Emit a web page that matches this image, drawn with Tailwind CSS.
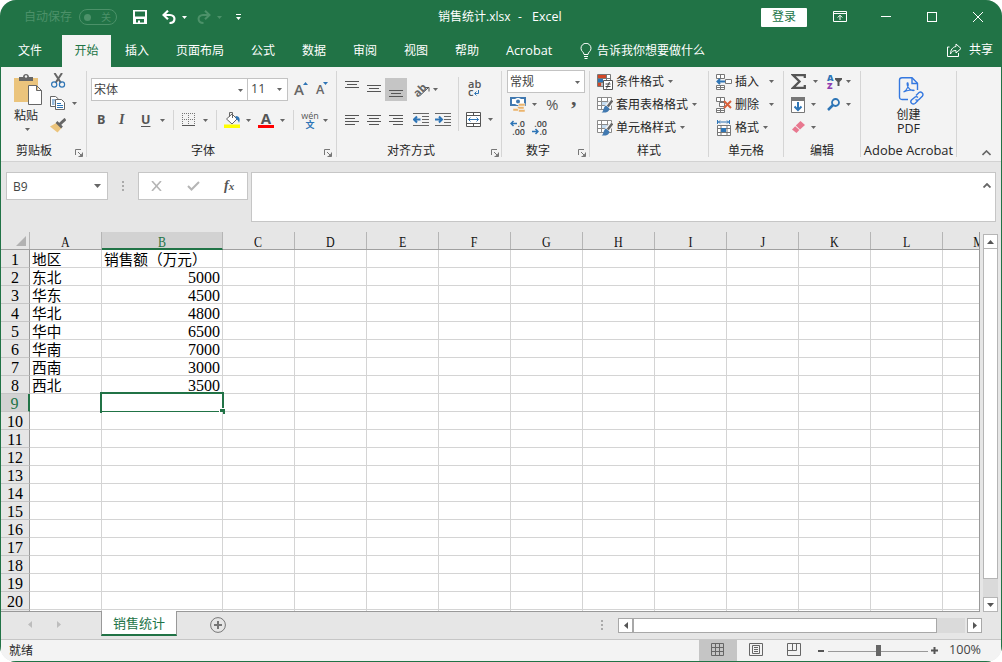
<!DOCTYPE html>
<html lang="zh-CN">

<head>
  <meta charset="UTF-8" />
  <meta name="viewport" content="width=device-width, initial-scale=1.0" />
  <title>销售统计.xlsx - Excel</title>
  <script src="https://cdn.jsdelivr.net/npm/@tailwindcss/browser@4"></script>
</head>

<body class="bg-white">
  <!-- Iconos compartidos -->
  <svg class="hidden">
    <symbol id="caret" viewBox="0 0 5 3"><path d="M0 0h5L2.5 3z" fill="#666" /></symbol>
    <symbol id="launcher" viewBox="0 0 8 8"><path d="M.5 6V.5H6M3 3l4 4M7.5 3.5v4h-4" fill="none" stroke="#777" /><path d="M7.5 4v3.5H4z" fill="#777" /></symbol>
    <symbol id="brushtable" viewBox="0 0 16 16">
      <path d="M.5.5h14v12H.5zM.5 4.5h14M.5 8.5h14M4.500.5v12M10.500.5v12" fill="#fff" stroke="#8a8a8a" />
      <path d="M5 5h5v3H5z" fill="#c5dcf0" />
      <path d="M15.5 3.500l-6 7" stroke="#f3f3f3" stroke-width="5" /><path d="M15.300 3.500l-4.500 6" stroke="#666" stroke-width="2.400" />
      <path d="M9 8.500l3.500 3c-.5 3.500-3.500 4.500-8 4 2.500-1 1.500-6 4.500-7z" fill="#4179b0" />
    </symbol>
  </svg>

  <div class="w-[1002px] h-[662px] rounded-[16px] overflow-hidden font-['Open_Sans','Noto_Sans_CJK_SC',sans-serif] text-[12px] leading-none text-[#262626]">
    <div class="w-full h-full border border-t-0 border-[#217346] bg-[#e6e6e6] flex flex-col whitespace-nowrap">

      <!-- Barra de título -->
      <header class="h-[34px] shrink-0 bg-[#217346] text-white flex items-center pl-[23px] *:shrink-0">
        <span class="w-[55px] text-[#4c9169]">自动保存</span>
        <div class="w-[38px] h-4 mr-4 border border-[#4c9169] rounded-full flex items-center text-[#4c9169] text-[10px]">
          <i class="w-[7px] h-[7px] rounded-full bg-[#4c9169] ml-1 mr-[10px]"></i>关
        </div>
        <svg class="w-[14px] h-[14px] mr-[15px]" viewBox="0 0 14 14"><path d="M0 0h14v14H0zM2 1.500v5h10v-5zM3 9v3.500h2V10.500h2v2h4V9z" fill="#fff" fill-rule="evenodd" /></svg>
        <svg class="w-[14px] h-[14px] mr-[6px]" viewBox="0 0 14 14" fill="none" stroke="#fff" stroke-width="2.200"><path d="M6 .7L1.500 5 6 9.300M2 5h6c6 0 6 8-.5 8" /></svg>
        <svg class="w-[5px] h-[3px] mr-[10px]" viewBox="0 0 5 3"><path d="M0 0h5L2.500 3z" fill="#fff" /></svg>
        <svg class="w-[14px] h-[14px] mr-[6px]" viewBox="0 0 14 14" fill="none" stroke="#4c9169" stroke-width="2"><path d="M8 .7L12.500 5 8 9.300M12 5H6c-6 0-6 8 .5 8" /></svg>
        <svg class="w-[5px] h-[3px] mr-[14px]" viewBox="0 0 5 3"><path d="M0 0h5L2.500 3z" fill="#4c9169" /></svg>
        <svg class="w-[5px] h-[6px] mr-[197px]" viewBox="0 0 5 6"><path d="M0 0h5v1H0zM0 3h5L2.500 6z" fill="#fff" /></svg>
        <h1 class="w-[323px] flex"><span class="w-[80px]">销售统计.xlsx</span><span class="w-[14px]">-</span><span class="text-[12.500px]">Excel</span></h1>
        <button class="w-[46px] h-[19px] mr-[26px] bg-white text-[#217346] rounded-[1px]">登录</button>
        <svg class="w-[14px] h-[12px] mr-[34px] -mt-px" viewBox="0 0 14 12" fill="none" stroke="#fff"><path d="M.5.5h13v10H.5zM.5 2.500h13M7 9V4.500M4.700 6.500L7 4.200 9.300 6.500" /></svg>
        <svg class="w-[10px] h-[11px] mr-9 -mt-px" viewBox="0 0 10 11" stroke="#fff"><path d="M0 5.500h10" /></svg>
        <div class="w-[10px] h-[10px] mr-9 -mt-px border border-white"></div>
        <svg class="w-[10px] h-[10px] -mt-px" viewBox="0 0 10 10" stroke="#fff"><path d="M0 0l10 10M10 0L0 10" /></svg>
      </header>

      <!-- Pestañas -->
      <nav class="h-[33px] shrink-0 bg-[#217346] text-white flex items-center *:shrink-0">
        <span class="w-[61px] pl-[17px]">文件</span>
        <span class="w-[49px] h-8 mr-[14px] self-end bg-[#f3f3f3] text-[#217346] flex items-center justify-center pb-px">开始</span>
        <span class="w-[51px]">插入</span>
        <span class="w-[75px]">页面布局</span>
        <span class="w-[51px]">公式</span>
        <span class="w-[51px]">数据</span>
        <span class="w-[51px]">审阅</span>
        <span class="w-[51px]">视图</span>
        <span class="w-[51px]">帮助</span>
        <span class="w-[74px] text-[12.700px]">Acrobat</span>
        <svg class="w-3 h-4 mr-[5px]" viewBox="0 0 12 16" fill="none" stroke="#fff"><path d="M4 11.500C4 9 1 8.500 1 5.300a5 5 0 0 1 10 0C11 8.500 8 9 8 11.500zM4 13.500h4M4.500 15.500h3" /></svg>
        <span class="w-[350px] pt-px">告诉我你想要做什么</span>
        <svg class="w-[15px] h-[14px] mr-[7px] -mt-[2px]" viewBox="0 0 15 14" fill="none" stroke="#fff"><path d="M2.500 4H.5v9.500h11V10M9 1l5 4.500L9 10V7.500C6 7.500 4.500 8.500 3.500 11c0-4 2-7 5.500-7.500z" /></svg>
        <span class="-mt-[2px]">共享</span>
      </nav>

      <!-- Cinta de opciones -->
      <section class="h-[95px] shrink-0 bg-[#f3f3f3] border-b border-[#d2d2d2] flex pt-1 *:shrink-0 [&>div]:h-[86px] [&>div]:border-r [&>div]:border-[#d5d5d5]">

        <!-- Portapapeles -->
        <div class="w-[86px] flex flex-col">
          <div class="flex h-[72px]">
            <div class="w-[49px] pl-[13px] pt-[3px] flex flex-col">
              <svg class="w-7 h-8 shrink-0" viewBox="0 0 28 32"><path d="M0 4h24v24H0z" fill="#ebc47c" /><path d="M5 7V3h4c0-4 6-4 6 0h4v4z" fill="#666" /><circle cx="12" cy="2.500" r="1.200" fill="#f3f3f3" /><path d="M14.500 11.500h8l5 5v14h-13zM22.500 11.500v5h5" fill="#fff" stroke="#666" /></svg>
              <span class="mt-1">粘贴</span>
              <svg class="w-[5px] h-[3px] ml-[11px] mt-[6px]"><use href="#caret" /></svg>
            </div>
            <div class="flex flex-col gap-2 pt-[2px]">
              <svg class="w-4 h-[15px] ml-px" viewBox="0 0 16 15" fill="none"><path d="M3.500 0l6.500 10M11 0L4.500 10" stroke="#666" stroke-width="2" /><circle cx="3.200" cy="11.500" r="2.600" stroke="#2e75b6" stroke-width="1.200" /><circle cx="11" cy="11.500" r="2.600" stroke="#2e75b6" stroke-width="1.200" /></svg>
              <div class="flex items-center gap-[7px]">
                <svg class="w-[15px] h-[14px]" viewBox="0 0 15 14" fill="#fff" stroke="#666"><path d="M.5.5h5l3 2.500v7.500h-8z" /><path d="M5.500 3.500h6l3 3v7h-9z" /><path d="M2 4h3M2 6h2.500M2 8h2.500M7 7.500h4M7 9.500h6M7 11.500h6" stroke="#2e75b6" /></svg>
                <svg class="w-[5px] h-[3px]"><use href="#caret" /></svg>
              </div>
              <svg class="w-4 h-[15px]" viewBox="0 0 16 15"><path d="M0 8.500l7-4 5 5L7.500 14.500z" fill="#ebc47c" /><path d="M6.500 4l5.500 5.500" stroke="#666" stroke-width="2.500" /><path d="M9.500 6.500L15.500 1" stroke="#666" stroke-width="3" /></svg>
            </div>
          </div>
          <div class="flex items-center pl-[15px] mt-[2px]"><span class="w-[59px]">剪贴板</span><svg class="w-2 h-2 mt-1"><use href="#launcher" /></svg></div>
        </div>

        <!-- Fuente -->
        <div class="w-[250px] flex flex-col">
          <div class="flex items-center h-[23px] mt-[7px] ml-1">
            <div class="w-[157px] h-[23px] bg-white border border-[#c3c3c3] flex items-center justify-between pl-[2px] pr-1 pt-px text-[#444]">宋体<svg class="w-[5px] h-[3px]"><use href="#caret" /></svg></div>
            <div class="w-[40px] h-[23px] bg-white border border-l-0 border-[#c3c3c3] flex items-center justify-between pl-[3px] pr-[5px] text-[12.500px] text-[#444]">11<svg class="w-[5px] h-[3px]"><use href="#caret" /></svg></div>
            <span class="ml-[6px] text-[15px] font-semibold text-[#666]">A</span><svg class="w-[5px] h-[3px] mb-[13px] -ml-px" viewBox="0 0 5 3"><path d="M0 3h5L2.500 0z" fill="#2e75b6" /></svg>
            <span class="ml-[8px] mt-[2px] text-[12.500px] font-semibold text-[#666]">A</span><svg class="w-[5px] h-[3px] mb-[13px] -ml-px" viewBox="0 0 5 3"><path d="M0 0h5L2.500 3z" fill="#2e75b6" /></svg>
          </div>
          <div class="flex items-center h-[22px] mt-2 mb-3 pl-[10px] text-[#555] *:shrink-0">
            <b class="w-[22px] text-[12.500px]">B</b>
            <i class="w-[22px] font-['Liberation_Serif'] font-bold text-[14px]">I</i>
            <b class="w-[19px] text-[12.500px] underline underline-offset-2">U</b>
            <svg class="w-[5px] h-[3px]"><use href="#caret" /></svg>
            <i class="w-px h-5 bg-[#d5d5d5] ml-2 mr-2"></i>
            <svg class="w-[13px] h-[14px] mr-[8px]" viewBox="0 0 13 14" fill="none" stroke="#777"><path d="M.5 0v12M6.500 0v12M12.500 0v12M0 .5h13M0 6.500h13" stroke-dasharray="1 1" /><path d="M0 12.500h13" stroke="#555" /></svg>
            <svg class="w-[5px] h-[3px]"><use href="#caret" /></svg>
            <i class="w-px h-5 bg-[#d5d5d5] ml-2 mr-[7px]"></i>
            <svg class="w-4 h-4 mr-[6px]" viewBox="0 0 16 16"><path d="M2.500 7L8 2l5 5-5 5z" fill="#fff" stroke="#666" /><path d="M5.500 5V.5h3V6" fill="none" stroke="#666" /><path d="M11.500 4c4 0 5 3 3.500 7-.5-2-1-3-3-4z" fill="#2e75b6" /><path d="M0 12.500h16V16H0z" fill="#ff0" /></svg>
            <svg class="w-[5px] h-[3px] mr-[7px]"><use href="#caret" /></svg>
            <div class="w-4 h-4 mr-[6px] border-b-[3px] border-[#f00] flex items-end justify-center"><b class="text-[15px] leading-[13px]">A</b></div>
            <svg class="w-[5px] h-[3px]"><use href="#caret" /></svg>
            <i class="w-px h-5 bg-[#d5d5d5] ml-2 mr-[7px]"></i>
            <div class="w-[18px] mr-[4px] flex flex-col items-center"><span class="text-[9px] leading-[9px]">wén</span><b class="text-[9px] leading-[9px] text-[#2e75b6]">文</b></div>
            <svg class="w-[5px] h-[3px]"><use href="#caret" /></svg>
          </div>
          <div class="flex items-center pl-[104px] mt-[2px]"><span class="w-[133px]">字体</span><svg class="w-2 h-2 mt-1"><use href="#launcher" /></svg></div>
        </div>

        <!-- Alineación -->
        <div class="w-[165px] flex flex-col">
          <div class="flex h-[72px]">
            <div class="w-[121px] pt-[7px]">
              <div class="flex h-[23px] pl-2 *:shrink-0">
                <svg class="w-[14px] h-[23px] mr-2" stroke="#555"><path d="M0 3.500h14M2 6.500h10M0 9.500h14" /></svg>
                <svg class="w-[14px] h-[23px] mr-1" stroke="#555"><path d="M0 7.500h14M2 10.500h10M0 13.500h14" /></svg>
                <svg class="w-[22px] h-[23px] bg-[#c5c5c5] mr-[6px]" stroke="#555"><path d="M4 12.500h14M6 15.500h10M4 18.500h14" /></svg>
                <div class="w-4 text-[11px] font-bold text-[#666] -rotate-45 self-center pb-[2px]">ab</div>
                <svg class="w-[10px] h-[11px] -ml-[9px] mt-[7px] mr-[3px]" fill="none" stroke="#555"><path d="M0 10.500l8.500-8M5 2.500h4v4" /></svg>
                <svg class="w-[5px] h-[3px] self-center"><use href="#caret" /></svg>
              </div>
              <div class="flex items-center h-[22px] mt-2 pl-2 gap-2">
                <svg class="w-[14px] h-[11px]" stroke="#555"><path d="M0 .5h14M0 3.500h10M0 6.500h14M0 9.500h10" /></svg>
                <svg class="w-[14px] h-[11px]" stroke="#555"><path d="M0 .5h14M2 3.500h10M0 6.500h14M2 9.500h10" /></svg>
                <svg class="w-[14px] h-[11px]" stroke="#555"><path d="M0 .5h14M4 3.500h10M0 6.500h14M4 9.500h10" /></svg>
                <svg class="w-4 h-[13px] ml-[2px] -mt-px" fill="none" stroke="#666"><path d="M0 .5h16M9 3.500h7M9 6.500h7M9 9.500h7M0 12.500h16" /><path d="M7.500 6.500H1M4 3.500l-3 3 3 3" stroke="#2e75b6" stroke-width="2" /></svg>
                <svg class="w-4 h-[13px] -ml-[2px] -mt-px" fill="none" stroke="#666"><path d="M0 .5h16M9 3.500h7M9 6.500h7M9 9.500h7M0 12.500h16" /><path d="M0 6.500h6.500M4 3.500l3 3-3 3" stroke="#2e75b6" stroke-width="2" /></svg>
              </div>
            </div>
            <div class="border-l border-[#d5d5d5] h-[54px] mt-[6px] pl-[7px]">
              <div class="w-[14px] pt-[3px] pl-[2px] text-[11px] leading-[8px] font-semibold text-[#555]">ab<div class="flex">c<svg class="w-[5px] h-[6px] mt-[2px] ml-px" fill="none" stroke="#2e75b6"><path d="M4.500 0v3.500H1M2.500 1.500l-2 2 2 2" /></svg></div></div>
              <div class="flex items-center mt-[16px] gap-[7px]">
                <svg class="w-[15px] h-[15px]" fill="#fff" stroke="#555"><path d="M.5.5h14v14H.5zM.5 3.500h14M.5 11.500h14M7.500.5v3M7.500 11.500v3" /><path d="M2.500 7.500h10M4.500 5.500l-2 2 2 2M10.500 5.500l2 2-2 2" fill="none" stroke="#2e75b6" /></svg>
                <svg class="w-[5px] h-[3px]"><use href="#caret" /></svg>
              </div>
            </div>
          </div>
          <div class="flex items-center pl-[50px] mt-[2px]"><span class="w-[104px]">对齐方式</span><svg class="w-2 h-2 mt-1"><use href="#launcher" /></svg></div>
        </div>

        <!-- Número -->
        <div class="w-[88px] flex flex-col">
          <div class="h-[72px] pl-[5px] -mt-px">
            <div class="w-[78px] h-[23px] bg-white border border-[#c3c3c3] flex items-center justify-between pl-[2px] pr-1 pt-px text-[#444]">常规<svg class="w-[5px] h-[3px]"><use href="#caret" /></svg></div>
            <div class="flex items-center h-[23px] pl-[3px] text-[#555]">
              <svg class="w-4 h-4" viewBox="0 0 16 16"><path d="M0 0h16v9H0z" fill="#4179b0" /><path d="M2 2h3l2-1h2l2 1h3v5h-3L9 8H7L5 7H2z" fill="#fff" /><circle cx="8" cy="4.500" r="2" fill="#4179b0" /><path d="M8.500 6.500H15v2.500H8.500zM7.500 9.500H14V12H7.500zM3 11.500h5.500V14H3zM8.500 12.500H15V15H8.500z" fill="#ebb46c" stroke="#f3f3f3" stroke-width=".5" /></svg>
              <svg class="w-[5px] h-[3px] ml-[6px] mr-[9px]"><use href="#caret" /></svg>
              <span class="text-[15px] w-[25px]">%</span>
              <b class="font-['Liberation_Serif'] text-[22px] leading-[12px] pb-[13px]">,</b>
            </div>
            <div class="flex items-center h-[23px] pl-[3px] gap-[7px] text-[9px] leading-[8px] text-[#444] font-semibold">
              <div class="w-[15px]"><div class="flex justify-end"><svg class="w-[7px] h-[7px]" fill="none" stroke="#2e75b6" stroke-width="1.500"><path d="M7 3.500H1M3.500 1L1 3.500 3.500 6" /></svg>.0</div><div class="text-right">.00</div></div>
              <div class="w-[15px]"><div class="text-right">.00</div><div class="flex justify-end"><svg class="w-[7px] h-[7px]" fill="none" stroke="#2e75b6" stroke-width="1.500"><path d="M0 3.500h6M3.500 1L6 3.500 3.500 6" /></svg>.0</div></div>
            </div>
          </div>
          <div class="flex items-center pl-[24px] mt-[3px]"><span class="w-[52px]">数字</span><svg class="w-2 h-2 mt-1"><use href="#launcher" /></svg></div>
        </div>

        <!-- Estilos -->
        <div class="w-[119px] flex flex-col">
          <div class="h-[72px] pl-[7px] -mt-px [&>p]:h-[23px] [&>p]:flex [&>p]:items-center [&>p]:gap-[3px]">
            <p><svg class="w-4 h-4" viewBox="0 0 16 16"><path d="M.5.500h13v12H.5zM.5 4.500h13M.5 8.500h13M5 .5v12M9.500.5v12" fill="#fff" stroke="#777" /><path d="M1 1h8v3H1zM1 9h3v3H1z" fill="#d24726" /><path d="M1 5h5v3H1z" fill="#2e75b6" /><path d="M6.500 6.500h9v9h-9z" fill="#fff" stroke="#555" /><path d="M8.500 10h5M8.500 12.500h5M12.500 8l-3 6.500" stroke="#444" /></svg>条件格式<svg class="w-[5px] h-[3px] ml-px"><use href="#caret" /></svg></p>
            <p><svg class="w-4 h-4"><use href="#brushtable" /></svg>套用表格格式<svg class="w-[5px] h-[3px] ml-px"><use href="#caret" /></svg></p>
            <p><svg class="w-4 h-4"><use href="#brushtable" /></svg>单元格样式<svg class="w-[5px] h-[3px] ml-px"><use href="#caret" /></svg></p>
          </div>
          <div class="pl-[47px] mt-[3px]">样式</div>
        </div>

        <!-- Celdas -->
        <div class="w-[75px] flex flex-col">
          <div class="h-[72px] pl-[7px] -mt-px [&>p]:h-[23px] [&>p]:flex [&>p]:items-center [&>p]:gap-[3px]">
            <p><svg class="w-4 h-4" viewBox="0 0 16 16" fill="#fff" stroke="#777"><path d="M.5.500h8v4h-8zM4.500.5v4M.5 11.500h8v4h-8zM4.500 11.500v4M.5 13.500h8M9.500 5.500h6v4h-6z" /><path d="M9 7.500H1M4 5L1.500 7.500 4 10" fill="none" stroke="#2e75b6" stroke-width="2" /></svg>插入<svg class="w-[5px] h-[3px] ml-[7px]"><use href="#caret" /></svg></p>
            <p><svg class="w-4 h-4" viewBox="0 0 16 16" fill="#fff" stroke="#777"><path d="M.5.500h8v4h-8zM4.500.5v4M.5 11.500h8v4h-8zM4.500 11.500v4M.5 13.500h8M3.500 5.500h5v4h-5z" /><path d="M8 4l7 7M15 4l-7 7" fill="none" stroke="#d9603b" stroke-width="2" /></svg>删除<svg class="w-[5px] h-[3px] ml-[7px]"><use href="#caret" /></svg></p>
            <p><svg class="w-4 h-4" viewBox="0 0 16 16" fill="#fff" stroke="#777"><path d="M1.500 5.500h13v10h-13zM1.500 8.500h13M1.500 12.500h13M5 5.500v10M11 5.500v10" /><path d="M5 8h5v4H5z" fill="#2e75b6" stroke="none" /><path d="M1.500 0v4M13.500 0v4M2 2h11M4 .5L2.500 2 4 3.500M11 .5L12.500 2 11 3.500" fill="none" stroke="#2e75b6" /></svg>格式<svg class="w-[5px] h-[3px] ml-px"><use href="#caret" /></svg></p>
          </div>
          <div class="pl-[19px] mt-[3px]">单元格</div>
        </div>

        <!-- Edición -->
        <div class="w-[77px] flex flex-col">
          <div class="h-[72px] pl-[7px] -mt-px [&>p]:h-[23px] [&>p]:flex [&>p]:items-center">
            <p>
              <svg class="w-[15px] h-[15px] mr-[7px]" fill="none" stroke="#555" stroke-width="2.300"><path d="M13.800 4V1.200H2L8.500 7.500 2 13.800h11.800V11" /></svg>
              <svg class="w-[5px] h-[3px] mr-[9px]"><use href="#caret" /></svg>
              <span class="w-[7px] text-[9px] leading-[8px] font-bold text-[#2e75b6] flex flex-col"><b>A</b><b class="text-[#8e3db0]">Z</b></span>
              <svg class="w-[7px] h-[8px] ml-px mr-1" fill="#555"><path d="M0 0h7v1.500L4.500 4v4h-2V4L0 1.500z" /></svg>
              <svg class="w-[5px] h-[3px]"><use href="#caret" /></svg>
            </p>
            <p>
              <svg class="w-[15px] h-[16px] mr-[5px]" fill="none"><path d="M.5.500h13v15H.5z" fill="#fff" stroke="#777" /><path d="M0 0h14v4H0z" fill="#777" /><path d="M7 5v8M3.500 9.500L7 13l3.500-3.500" stroke="#2e75b6" stroke-width="2" /></svg>
              <svg class="w-[5px] h-[3px] mr-[11px]"><use href="#caret" /></svg>
              <svg class="w-[13px] h-[13px] mr-[6px]" fill="none" stroke="#2e75b6"><circle cx="8.500" cy="4.500" r="3.500" stroke-width="1.800" /><path d="M6 7l-5 5" stroke-width="2.500" /></svg>
              <svg class="w-[5px] h-[3px]"><use href="#caret" /></svg>
            </p>
            <p>
              <svg class="w-[14px] h-[13px] ml-px mr-[5px]"><path d="M8.500 0L13 4 8 8.500 3.800 4.500z" fill="#e8788f" /><path d="M3.200 5.200L7.300 9 4.500 12 0 8.500z" fill="#e8788f" /></svg>
              <svg class="w-[5px] h-[3px]"><use href="#caret" /></svg>
            </p>
          </div>
          <div class="pl-[26px] mt-[3px]">编辑</div>
        </div>

        <!-- Acrobat -->
        <div class="w-[96px] flex flex-col items-center">
          <div class="h-[72px] pt-[6px] flex flex-col items-center">
            <svg class="w-[26px] h-7 ml-[4px]" viewBox="0 0 26 28" fill="none" stroke="#3478e0" stroke-width="1.400"><path d="M10 22.500H4Q1.500 22.500 1.500 20V3Q1.500.8 4 .8h10l5.500 5.500V13" /><path d="M14 1v5.500h5.500" /><path d="M5.500 15c4-2 5.500-7 4.500-9-1-1-1.500 1 0 4 1.500 2.500 3 4 6 3.500 1-.8-6-1-10.500 1.500z" stroke-width="1.100" /><path d="M18 18.500l3-3c2-1.500 5 1 3.500 3.500l-3.500 3.500c-1 1-2.500.8-3.500 0" /><path d="M20 20.500c-1-1-2.500-1-3.500 0L13.500 23c-2 2.500 1 5 3.500 3.500l3-3" /></svg>
            <span class="mt-[4px]">创建</span>
            <span class="mt-[2px] text-[12.500px]">PDF</span>
          </div>
          <span class="text-[12.900px] mt-px">Adobe Acrobat</span>
        </div>
        <svg class="w-[9px] h-[6px] ml-[25px] mt-[79px]" fill="none" stroke="#666" stroke-width="1.600"><path d="M.5 5l4-4 4 4" /></svg>
      </section>

      <!-- Barra de fórmulas -->
      <section class="h-[70px] shrink-0 flex items-start pt-[10px] pl-[5px] *:shrink-0">
        <div class="w-[102px] h-[28px] bg-white border border-[#c6c6c6] flex items-center justify-between pl-[6px] pr-[6px] text-[#444]"><span class="pt-px">B9</span><svg class="w-[7px] h-1"><path d="M0 0h7L3.500 4z" fill="#666" /></svg></div>
        <div class="w-[2px] ml-[14px] mt-[9px] mr-[14px] flex flex-col gap-[2px] *:h-[2px] *:bg-[#aaa]"><i></i><i></i><i></i></div>
        <div class="w-[110px] h-[28px] bg-white border border-[#c6c6c6] flex items-center pl-3">
          <svg class="w-[11px] h-[10px] mr-[25px]" stroke="#b5b5b5" stroke-width="1.600"><path d="M1 0l9 10M10 0L1 10" /></svg>
          <svg class="w-[13px] h-[10px] mr-6" fill="none" stroke="#b5b5b5" stroke-width="2"><path d="M1 5l3.500 3.500L12 1" /></svg>
          <i class="font-['Liberation_Serif'] font-bold text-[14px] text-[#555] pb-px">f<span class="text-[11px]">x</span></i>
        </div>
        <div class="w-[745px] h-[50px] ml-[3px] bg-white border border-[#c6c6c6] flex justify-end pr-1 pt-[10px]"><svg class="w-[8px] h-[5px]" fill="none" stroke="#666" stroke-width="1.800"><path d="M.5 4.500L4 1l3.500 3.500" /></svg></div>
      </section>

      <!-- Hoja -->
      <main class="h-[380px] shrink-0 flex">
        <div class="w-[979px] h-[380px] overflow-hidden border-r border-b border-[#999]">
          <div class="h-[18px] flex font-['Liberation_Serif'] text-[15px] text-[#111] border-b border-[#a0a0a0] [&>b]:font-normal [&>b]:w-[72px] [&>b]:shrink-0 [&>b]:border-r [&>b]:border-[#b5b5b5] [&>b]:text-center [&>b]:leading-[21px] [&_u]:inline-block [&_u]:no-underline [&_u]:scale-x-80">
            <span class="w-[29px] shrink-0 border-r border-[#b5b5b5] flex items-end justify-end p-[3px]"><svg class="w-[10px] h-[10px]"><path d="M10 0v10H0z" fill="#b2b2b2" /></svg></span>
            <b><u>A</u></b>
            <span class="w-[121px] h-[18px] shrink-0 bg-[#d2d2d2] border-r border-r-[#b5b5b5] border-b-2 border-b-[#217346] text-[#217346] text-center leading-[21px]"><u>B</u></span>
            <b><u>C</u></b><b><u>D</u></b><b><u>E</u></b><b><u>F</u></b><b><u>G</u></b><b><u>H</u></b><b><u>I</u></b><b><u>J</u></b><b><u>K</u></b><b><u>L</u></b><b><u>M</u></b>
          </div>
          <div id="rows"></div>
        </div>
        <!-- Barra de desplazamiento vertical -->
        <div class="w-[15px] ml-[3px] pt-[2px] flex flex-col">
          <div class="h-[15px] border border-[#b5b5b5] bg-white flex items-center justify-center"><svg class="w-[7px] h-1"><path d="M0 4h7L3.500 0z" fill="#555" /></svg></div>
          <div class="h-[330px] border border-t-0 border-[#b5b5b5] bg-white"></div>
          <div class="flex-1 bg-[#dadada]"></div>
          <div class="h-[15px] border border-[#b5b5b5] bg-white flex items-center justify-center"><svg class="w-[7px] h-1"><path d="M0 0h7L3.500 4z" fill="#555" /></svg></div>
        </div>
      </main>

      <!-- Pestañas de hojas -->
      <section class="h-[27px] shrink-0 flex items-start *:shrink-0">
        <svg class="w-1 h-[7px] ml-[27px] mt-[9px]"><path d="M4 0v7L0 3.500z" fill="#bdbdbd" /></svg>
        <svg class="w-1 h-[7px] ml-[25px] mt-[9px]"><path d="M0 0v7l4-3.500z" fill="#bdbdbd" /></svg>
        <div class="w-[76px] h-[25px] -mt-px ml-[40px] bg-white border-x border-x-[#999] border-b-2 border-b-[#217346] text-[#217346] text-[13px] flex items-center justify-center pt-px">销售统计</div>
        <svg class="w-4 h-4 ml-[33px] mt-[5px]" fill="none" stroke="#777"><circle cx="8" cy="8" r="7.400" /><path d="M8 4v8M4 8h8" stroke-width="2" /></svg>
        <div class="w-[2px] ml-[375px] mt-2 flex flex-col gap-[2px] *:h-[2px] *:bg-[#aaa]"><i></i><i></i><i></i></div>
        <div class="w-[364px] h-[15px] ml-[15px] mt-[6px] bg-[#dadada] flex">
          <div class="w-[15px] border border-[#a8a8a8] bg-white flex items-center justify-center"><svg class="w-1 h-[7px]"><path d="M4 0v7L0 3.500z" fill="#555" /></svg></div>
          <div class="w-[304px] border border-[#a8a8a8] bg-white"></div>
          <div class="flex-1 border-r-2 border-[#e6e6e6]"></div>
          <div class="w-[15px] border border-[#a8a8a8] bg-white flex items-center justify-center"><svg class="w-1 h-[7px]"><path d="M0 0v7l4-3.500z" fill="#555" /></svg></div>
        </div>
      </section>

      <!-- Barra de estado -->
      <footer class="flex-1 bg-[#f3f3f3] border-t border-[#c6c6c6] flex items-center pl-2 text-[#444] *:shrink-0">
        <span class="w-[690px] text-[#262626]">就绪</span>
        <div class="w-[38px] h-full bg-[#c5c5c5] flex items-center justify-center"><svg class="w-[13px] h-[13px] mr-px mb-[2px]" fill="none" stroke="#666"><path d="M.5.500h12v12H.5zM.5 4.500h12M.5 8.500h12M4.500.5v12M8.500.5v12" /></svg></div>
        <svg class="w-[14px] h-[13px] ml-3 mr-6 -mt-[2px]" fill="none" stroke="#666"><path d="M.5.500h13v12H.5zM3.500 2.500h7v8h-7zM5 4.500h4M5 6.500h4M5 8.500h4" /></svg>
        <svg class="w-[14px] h-[13px] mr-[17px] -mt-[2px]" fill="none" stroke="#666"><path d="M.5.500h13v12H.5zM.5 7.500h9v-7M5.500.5v7" /></svg>
        <i class="w-[6px] h-[2px] bg-[#555] mr-1"></i>
        <svg class="w-[100px] h-[11px] mr-[3px] -mt-px"><path d="M0 6.500h100" stroke="#999" /><path d="M48 0h5v11h-5z" fill="#666" /></svg>
        <svg class="w-[7px] h-[7px] mr-[11px]" stroke="#555" stroke-width="2"><path d="M3.500 0v7M0 3.500h7" /></svg>
        <span class="text-[12.600px]">100%</span>
      </footer>
    </div>
  </div>

  <script>
    const data = [['地区', '销售额（万元）'], ['东北', 5000], ['华东', 4500], ['华北', 4800], ['华中', 6500], ['华南', 7000], ['西南', 3000], ['西北', 3500]];
    const rows = document.getElementById('rows');

    for (let i = 1; i <= 21; i++) {
      const [name, value] = data[i - 1] || ['', ''];
      const active = i === 9;
      const header = active ? 'bg-[#d2d2d2] text-[#217346] border-r-2 border-r-[#217346]' : 'border-r border-r-[#999]';
      const align = i > 1 ? "justify-end pr-[2px] pt-[3px] font-['Liberation_Serif'] text-[16px]" : 'pl-[2px] pt-px';
      let html = `<div class="w-[29px] shrink-0 border-b border-b-[#c6c6c6] flex items-center justify-center pt-[3px] font-['Liberation_Serif'] text-[16px] ${header}">${i > 20 ? '' : i}</div>`;
      html += `<div class="w-[72px] shrink-0 bg-white border-r border-b border-[#d4d4d4] pl-[2px] pt-px flex items-center">${name}</div>`;
      html += `<div class="w-[121px] shrink-0 bg-white border-r border-b border-[#d4d4d4] flex items-center relative ${align}">${value}`;
      if (active) {
        // selección
        html += '<div class="absolute -left-[2px] -top-[2px] w-[124px] h-[21px] border-2 border-[#217346]"></div><div class="absolute left-[117px] top-[14px] w-[6px] h-[6px] bg-[#217346] border-l border-t border-white"></div>';
      }
      html += '</div>';
      for (let c = 0; c < 11; c++) html += '<div class="w-[72px] shrink-0 bg-white border-r border-b border-[#d4d4d4]"></div>';
      rows.innerHTML += `<div class="h-[18px] flex text-[14.670px] text-black">${html}</div>`;
    }
  </script>
</body>

</html>
